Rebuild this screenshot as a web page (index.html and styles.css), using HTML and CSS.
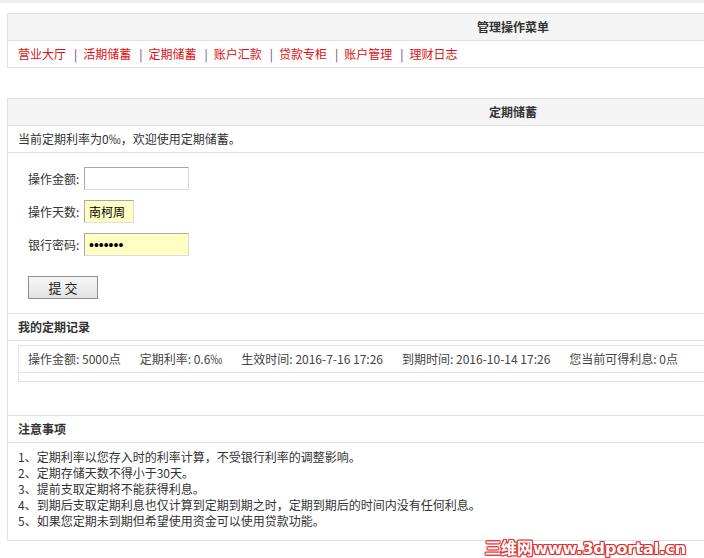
FILE: index.html
```html
<!DOCTYPE html>
<html lang="zh-CN">
<head>
<meta charset="utf-8">
<title>定期储蓄</title>
<link rel="stylesheet" href="styles.css">
</head>
<body>
<div class="topbar"></div>

<div class="box menu-box">
  <div class="box-head">管理操作菜单</div>
  <div class="row nav">
    <a href="#">营业大厅</a><span class="sep">|</span><a href="#">活期储蓄</a><span class="sep">|</span><a href="#">定期储蓄</a><span class="sep">|</span><a href="#">账户汇款</a><span class="sep">|</span><a href="#">贷款专柜</a><span class="sep">|</span><a href="#">账户管理</a><span class="sep">|</span><a href="#">理财日志</a>
  </div>
</div>

<div class="box main-box">
  <div class="box-head">定期储蓄</div>
  <div class="row line">当前定期利率为0‰，欢迎使用定期储蓄。</div>
  <div class="form line">
    <div class="field"><label>操作金额:</label><input class="inp" type="text"></div>
    <div class="field"><label>操作天数:</label><input class="inp short yellow" type="text" value="南柯周"></div>
    <div class="field"><label>银行密码:</label><input class="inp yellow pwd" type="password" value="1234567"></div>
    <button class="btn" type="button">提 交</button>
  </div>
  <div class="row sub-head line">我的定期记录</div>
  <div class="records line">
    <div class="rec-box">
      <div class="rec-row">操作金额: 5000点<span class="gap"></span>定期利率: 0.6‰<span class="gap"></span>生效时间: 2016-7-16 17:26<span class="gap"></span>到期时间: 2016-10-14 17:26<span class="gap"></span>您当前可得利息: 0点</div>
      <div class="rec-empty"></div>
    </div>
  </div>
  <div class="row sub-head line">注意事项</div>
  <div class="notes">
    <div>1、定期利率以您存入时的利率计算，不受银行利率的调整影响。</div>
    <div>2、定期存储天数不得小于30天。</div>
    <div>3、提前支取定期将不能获得利息。</div>
    <div>4、到期后支取定期利息也仅计算到定期到期之时，定期到期后的时间内没有任何利息。</div>
    <div>5、如果您定期未到期但希望使用资金可以使用贷款功能。</div>
  </div>
</div>

<div class="watermark">三维网www.3dportal.cn</div>
</body>
</html>
```

FILE: styles.css
```css
html, body {
  margin: 0;
  padding: 0;
  overflow: hidden;
  background: #fff;
}
body {
  font-family: "Noto Sans CJK SC", "Microsoft YaHei", sans-serif;
  font-size: 12px;
  color: #333;
  width: 1100px;
  height: 558px;
  position: relative;
}
.topbar {
  height: 3px;
  background: #eeeeee;
}
.box {
  margin-left: 7px;
  width: 1012px;
  border: 1px solid #e2e2e2;
  box-sizing: border-box;
}
.menu-box {
  margin-top: 10px;
}
.main-box {
  margin-top: 30px;
}
.box-head {
  height: 26px;
  line-height: 26px;
  background: #f4f4f4;
  text-align: center;
  font-weight: bold;
  color: #333;
  border-bottom: 1px solid #e2e2e2;
}
.row {
  height: 26px;
  line-height: 26px;
  padding-left: 10px;
}
.line {
  border-bottom: 1px solid #e2e2e2;
}
.nav a {
  color: #dd1111;
  text-decoration: none;
}
.nav .sep {
  color: #6a3d7a;
  margin: 0 6px 0 8px;
}
.form {
  padding: 14px 0 14px 20px;
  display: flex;
  flex-direction: column;
  align-items: flex-start;
}
.field {
  display: flex;
  align-items: center;
  height: 23px;
  margin-bottom: 10px;
}
.field:nth-child(3) {
  margin-bottom: 20px;
}
.field label {
  width: 56px;
  color: #333;
}
.inp {
  box-sizing: border-box;
  width: 105px;
  height: 23px;
  margin: 0;
  padding: 0 4px;
  border: 1px solid #a9a9a9;
  border-right-color: #dcdcdc;
  border-bottom-color: #dcdcdc;
  font-family: "Noto Sans CJK SC", sans-serif;
  font-size: 12px;
  color: #000;
  background: #fff;
  outline: none;
}
.inp.short {
  width: 50px;
}
.inp.yellow {
  background: #ffffc4;
}
.inp.pwd {
  font-family: "Liberation Sans", sans-serif;
  font-size: 14px;
  letter-spacing: 0;
}
.btn {
  box-sizing: border-box;
  width: 70px;
  height: 23px;
  margin: 0;
  padding: 0;
  border: 1px solid #8f8f8f;
  background: linear-gradient(#f7f7f7, #e3e3e3);
  font-family: "Noto Sans CJK SC", sans-serif;
  font-size: 13px;
  color: #222;
}
.sub-head {
  font-weight: bold;
  color: #333;
}
.records {
  height: 75px;
  padding: 4px 0 0 10px;
  box-sizing: border-box;
}
.rec-box {
  border: 1px solid #e2e2e2;
  border-right: none;
}
.rec-row {
  height: 26px;
  line-height: 26px;
  padding-left: 9px;
  border-bottom: 1px solid #e2e2e2;
  color: #444;
}
.rec-row .gap {
  display: inline-block;
  width: 19px;
}
.rec-empty {
  height: 8px;
}
.notes {
  padding: 6px 0 11px 10px;
  line-height: 16px;
  color: #333;
}
.watermark {
  position: absolute;
  left: 485px;
  top: 535px;
  font-family: "DejaVu Sans", sans-serif;
  font-weight: bold;
  font-size: 16px;
  letter-spacing: 0;
  color: #fff;
  text-shadow: 1px 0 0 #e03030, -1px 0 0 #e03030, 0 1px 0 #e03030, 0 -1px 0 #e03030, 1px 1px 0 #e03030, -1px -1px 0 #e03030, 1px -1px 0 #e03030, -1px 1px 0 #e03030;
  white-space: nowrap;
}
```
